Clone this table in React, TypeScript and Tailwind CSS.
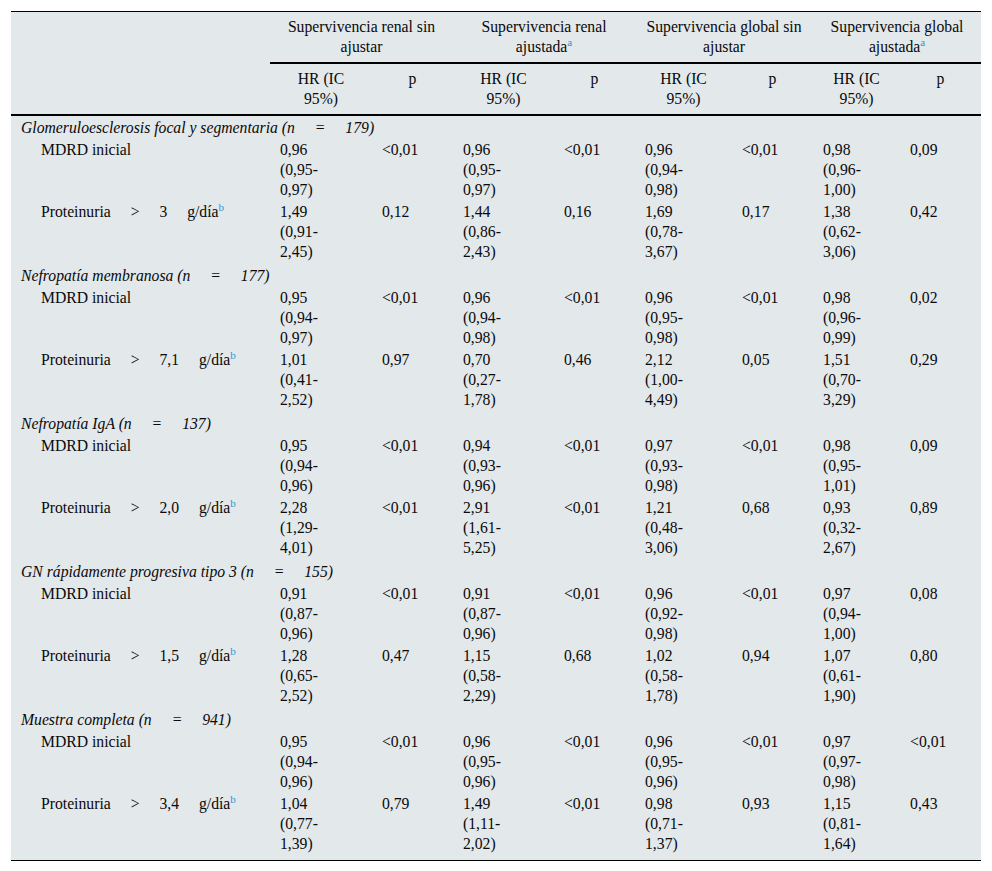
const groups = [
  {
    name: "Glomeruloesclerosis focal y segmentaria",
    n: "179",
    rows: [
      { label: "MDRD inicial", vals: [["0,96", "(0,95-", "0,97)"], "<0,01", ["0,96", "(0,95-", "0,97)"], "<0,01", ["0,96", "(0,94-", "0,98)"], "<0,01", ["0,98", "(0,96-", "1,00)"], "0,09"] },
      { label: "3", prot: true, vals: [["1,49", "(0,91-", "2,45)"], "0,12", ["1,44", "(0,86-", "2,43)"], "0,16", ["1,69", "(0,78-", "3,67)"], "0,17", ["1,38", "(0,62-", "3,06)"], "0,42"] },
    ],
  },
  {
    name: "Nefropatía membranosa",
    n: "177",
    rows: [
      { label: "MDRD inicial", vals: [["0,95", "(0,94-", "0,97)"], "<0,01", ["0,96", "(0,94-", "0,98)"], "<0,01", ["0,96", "(0,95-", "0,98)"], "<0,01", ["0,98", "(0,96-", "0,99)"], "0,02"] },
      { label: "7,1", prot: true, vals: [["1,01", "(0,41-", "2,52)"], "0,97", ["0,70", "(0,27-", "1,78)"], "0,46", ["2,12", "(1,00-", "4,49)"], "0,05", ["1,51", "(0,70-", "3,29)"], "0,29"] },
    ],
  },
  {
    name: "Nefropatía IgA",
    n: "137",
    rows: [
      { label: "MDRD inicial", vals: [["0,95", "(0,94-", "0,96)"], "<0,01", ["0,94", "(0,93-", "0,96)"], "<0,01", ["0,97", "(0,93-", "0,98)"], "<0,01", ["0,98", "(0,95-", "1,01)"], "0,09"] },
      { label: "2,0", prot: true, vals: [["2,28", "(1,29-", "4,01)"], "<0,01", ["2,91", "(1,61-", "5,25)"], "<0,01", ["1,21", "(0,48-", "3,06)"], "0,68", ["0,93", "(0,32-", "2,67)"], "0,89"] },
    ],
  },
  {
    name: "GN rápidamente progresiva tipo 3",
    n: "155",
    rows: [
      { label: "MDRD inicial", vals: [["0,91", "(0,87-", "0,96)"], "<0,01", ["0,91", "(0,87-", "0,96)"], "<0,01", ["0,96", "(0,92-", "0,98)"], "<0,01", ["0,97", "(0,94-", "1,00)"], "0,08"] },
      { label: "1,5", prot: true, vals: [["1,28", "(0,65-", "2,52)"], "0,47", ["1,15", "(0,58-", "2,29)"], "0,68", ["1,02", "(0,58-", "1,78)"], "0,94", ["1,07", "(0,61-", "1,90)"], "0,80"] },
    ],
  },
  {
    name: "Muestra completa",
    n: "941",
    rows: [
      { label: "MDRD inicial", vals: [["0,95", "(0,94-", "0,96)"], "<0,01", ["0,96", "(0,95-", "0,96)"], "<0,01", ["0,96", "(0,95-", "0,96)"], "<0,01", ["0,97", "(0,97-", "0,98)"], "<0,01"] },
      { label: "3,4", prot: true, vals: [["1,04", "(0,77-", "1,39)"], "0,79", ["1,49", "(1,11-", "2,02)"], "<0,01", ["0,98", "(0,71-", "1,37)"], "0,93", ["1,15", "(0,81-", "1,64)"], "0,43"] },
    ],
  },
]

const heads = [
  ["Supervivencia renal sin", "ajustar", false],
  ["Supervivencia renal", "ajustada", true],
  ["Supervivencia global sin", "ajustar", false],
  ["Supervivencia global", "ajustada", true],
] as const

function Sup({ c }: { c: string }) {
  return <span className="relative -top-[6px] text-[11px] leading-none text-[#2f94d6]">{c}</span>
}

export default function App() {
  return (
    <div className="min-h-screen bg-white pt-[11px] pl-[11px] [font-family:'Liberation_Serif',serif] text-[15.7px] leading-5 text-[#0a0a0a]">
      <table className="w-[970px] table-fixed border-collapse bg-[#e3e8eb] border-t border-b border-black">
        <colgroup>
          <col className="w-[259px]" />
          <col className="w-[102px]" />
          <col className="w-[81px]" />
          <col className="w-[101px]" />
          <col className="w-[81px]" />
          <col className="w-[97px]" />
          <col className="w-[81px]" />
          <col className="w-[87px]" />
          <col className="w-[81px]" />
        </colgroup>
        <thead>
          <tr>
            <th rowSpan={2} className="border-b-2 border-black"></th>
            {heads.map(([a, b, sup], i) => (
              <th key={i} colSpan={2} className="font-normal text-center pt-[5px] pb-[5px] border-b-2 border-black">
                {a}
                <br />
                {b}
                {sup && <Sup c="a" />}
              </th>
            ))}
          </tr>
          <tr>
            {heads.map((_, i) => [
              <th key={i + "h"} className="font-normal text-center pt-[5px] pb-[5px] border-b-2 border-black">
                HR (IC
                <br />
                95%)
              </th>,
              <th key={i + "p"} className="font-normal text-center align-top pt-[5px] pb-[5px] border-b-2 border-black">
                p
              </th>,
            ])}
          </tr>
        </thead>
        <tbody>
          {groups.map((g, gi) => [
            <tr key={gi + "g"}>
              <td colSpan={9} className={`pl-[10px] italic pb-px ${gi === 0 ? "pt-[2px]" : "pt-[3px]"}`}>
                {g.name} <span className="[word-spacing:16px]">(n = {g.n})</span>
              </td>
            </tr>,
            ...g.rows.map((r, ri) => {
              const last = gi === groups.length - 1 && ri === g.rows.length - 1
              return (
                <tr key={gi + "-" + ri} className="align-top">
                  <td className={`pl-[30px] pt-px ${last ? "pb-[6px]" : "pb-px"}`}>
                    {r.prot ? (
                      <span className="[word-spacing:16px]">
                        Proteinuria &gt; {r.label} g/día
                        <Sup c="b" />
                      </span>
                    ) : (
                      r.label
                    )}
                  </td>
                  {r.vals.map((v, vi) => (
                    <td key={vi} className={`pl-[10px] pt-px ${last ? "pb-[6px]" : "pb-px"}`}>
                      {Array.isArray(v)
                        ? v.map((l, li) => <div key={li}>{l}</div>)
                        : v}
                    </td>
                  ))}
                </tr>
              )
            }),
          ])}
        </tbody>
      </table>
    </div>
  )
}
